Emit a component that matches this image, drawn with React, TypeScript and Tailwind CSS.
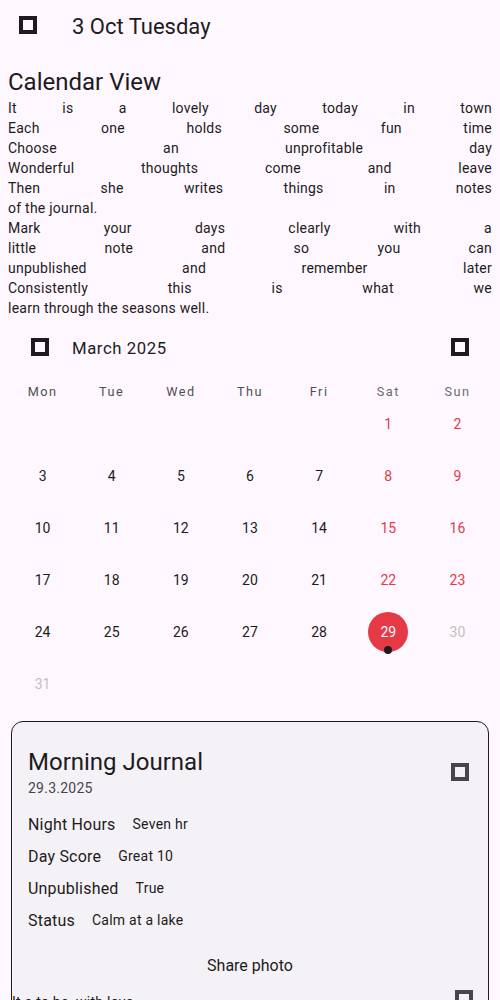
import React from 'react';

function Box({ className }: { className?: string }) {
    return (
        <svg width="18" height="18" viewBox="0 0 18 18" className={className}>
            <rect x="2" y="2" width="14" height="14" fill="none" stroke="currentColor" strokeWidth="4" />
        </svg>
    );
}

const weekdays = ['Mon', 'Tue', 'Wed', 'Thu', 'Fri', 'Sat', 'Sun'];

// March 2025 starts on a Saturday
const cells: (number | null)[] = [null, null, null, null, null, ...Array.from({ length: 31 }, (_, i) => i + 1)];

const selectedDay = 29;
const disabledFrom = 30;

const intro = [
    [
        'It is a lovely day today in town',
        'Each one holds some fun time',
        'Choose an unprofitable day',
        'Wonderful thoughts come and leave',
        'Then she writes things in notes',
        'of the journal.',
    ],
    [
        'Mark your days clearly with a',
        'little note and so you can',
        'unpublished and remember later',
        'Consistently this is what we',
        'learn through the seasons well.',
    ],
];

const details = [
    { label: 'Night Hours', value: 'Seven hr' },
    { label: 'Day Score', value: 'Great 10' },
    { label: 'Unpublished', value: 'True' },
    { label: 'Status', value: 'Calm at a lake' },
];

function DayCell({ day, col }: { day: number | null; col: number }) {
    if (day === null) return <div className="h-[52px]" />;

    if (day === selectedDay) {
        return (
            <div className="relative flex h-[52px] items-center justify-center">
                <div className="flex h-10 w-10 items-center justify-center rounded-full bg-[#e63946] text-[14px] leading-[14px] text-[#fafafa]">
                    {day}
                </div>
                <span className="absolute left-1/2 top-[40px] h-2 w-2 -translate-x-1/2 rounded-full bg-[#1d1b20]" />
            </div>
        );
    }

    let color = 'text-[#1d1b20]';
    if (col >= 5) color = 'text-[#e63946]';
    if (day >= disabledFrom) color = 'text-[#c0c0c0]';

    return (
        <div className={`flex h-[52px] items-center justify-center text-[14px] leading-[14px] ${color}`}>
            {day}
        </div>
    );
}

export default function App() {
    return (
        <div className="min-h-[1000px] w-[500px] overflow-hidden bg-[#fef7ff] font-['Roboto',sans-serif] text-[#1d1b20]">
            {/* top bar */}
            <div className="flex items-start pt-[13px]">
                <Box className="ml-[19px] mt-[3px] text-[#1d1b20]" />
                <h1 className="ml-[35px] text-[22px] leading-[28px]">3 Oct Tuesday</h1>
            </div>

            <div className="px-2">
                <h2 className="mt-[25px] text-[24px] leading-[32px]">Calendar View</h2>
                <div className="text-[14px] leading-[20px] tracking-[0.25px]">
                    {intro.map((para, p) => (
                        <p key={p}>
                            {para.map((line, i) => (
                                <span
                                    key={i}
                                    className={
                                        i < para.length - 1
                                            ? 'block text-justify [text-align-last:justify]'
                                            : 'block'
                                    }
                                >
                                    {line}
                                </span>
                            ))}
                        </p>
                    ))}
                </div>
            </div>

            {/* calendar */}
            <div className="mt-[19px] flex h-[24px] items-start justify-between px-[31px]">
                <div className="flex items-start">
                    <Box className="mt-[1px] text-[#1d1b20]" />
                    <span className="ml-[23px] text-[16.7px] leading-[24px] tracking-[0.6px]">March 2025</span>
                </div>
                <Box className="mt-[1px] text-[#1d1b20]" />
            </div>

            <div className="mt-[24px] grid grid-cols-7 px-2 text-[12.7px] leading-[13px] tracking-[1.5px]">
                {weekdays.map((d, i) => (
                    <div key={d} className={`text-center ${i >= 5 ? 'text-[#6b6b6b]' : 'text-[#4f4f4f]'}`}>
                        {d}
                    </div>
                ))}
            </div>

            <div className="grid grid-cols-7 px-2">
                {cells.map((day, i) => (
                    <DayCell key={i} day={day} col={i % 7} />
                ))}
            </div>

            {/* entry card */}
            <div className="mx-[11px] mt-[11px] rounded-xl border border-[#1d1b20] bg-[#f5f2f7] px-4 pt-[24px]">
                <div className="flex items-center justify-between">
                    <div>
                        <h3 className="text-[24px] leading-[32px]">Morning Journal</h3>
                        <p className="text-[14px] leading-[20px] tracking-[0.25px] text-[#49454f]">29.3.2025</p>
                    </div>
                    <Box className="mr-[3px] text-[#49454f]" />
                </div>

                <div className="mt-[15px] flex flex-col gap-2">
                    {details.map((d) => (
                        <div key={d.label} className="flex items-start gap-[17px]">
                            <span className="text-[16px] leading-[24px] tracking-[0.2px]">{d.label}</span>
                            <span className="text-[14px] leading-[22px] tracking-[0.25px]">{d.value}</span>
                        </div>
                    ))}
                </div>

                <p className="mt-[21px] text-center text-[16px] leading-[24px]">Share photo</p>

                <div className="-mx-4 mt-[14px] flex items-start justify-between pb-4">
                    <span className="whitespace-pre text-[14px] leading-[20px] tracking-[0.25px]">It a to be  with love</span>
                    <Box className="mr-[15px] -mt-[2px] text-[#49454f]" />
                </div>
            </div>
        </div>
    );
}
